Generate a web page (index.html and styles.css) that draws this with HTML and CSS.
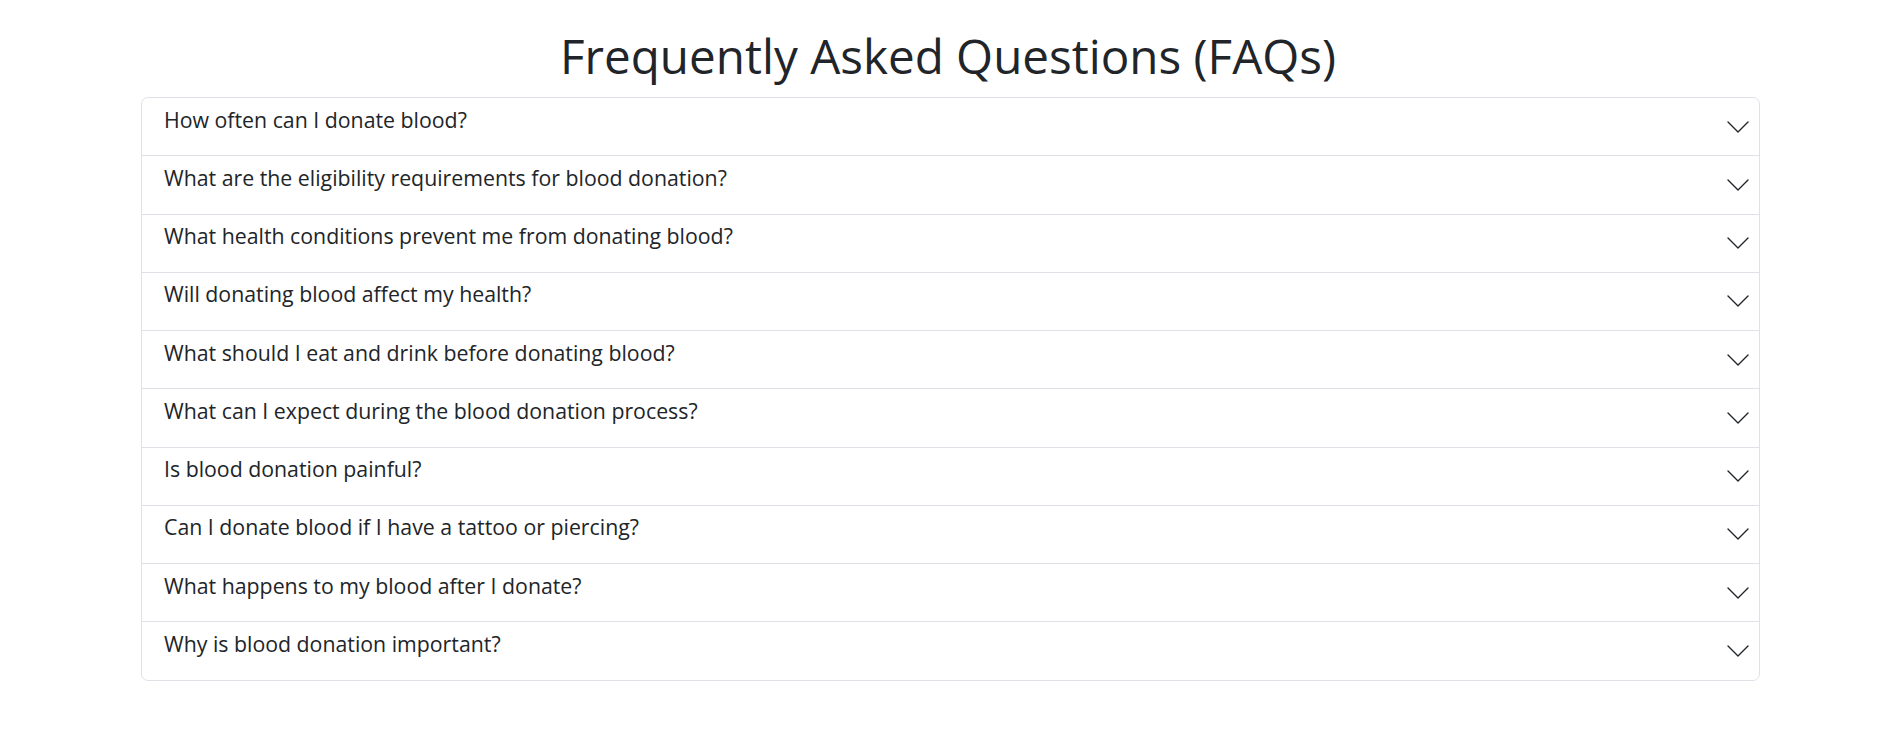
FILE: index.html
```html
<!DOCTYPE html>
<html lang="en">
<head>
<meta charset="utf-8">
<title>FAQs</title>
<link rel="stylesheet" href="styles.css">
</head>
<body>
<main class="page">
  <h1 class="title">Frequently Asked Questions (FAQs)</h1>
  <div class="faq">
    <div class="faq-item"><span class="faq-q">How often can I donate blood?</span><svg class="chev" viewBox="0 0 22 12"><path d="M1 1L11 11L21 1"/></svg></div>
    <div class="faq-item"><span class="faq-q">What are the eligibility requirements for blood donation?</span><svg class="chev" viewBox="0 0 22 12"><path d="M1 1L11 11L21 1"/></svg></div>
    <div class="faq-item"><span class="faq-q">What health conditions prevent me from donating blood?</span><svg class="chev" viewBox="0 0 22 12"><path d="M1 1L11 11L21 1"/></svg></div>
    <div class="faq-item"><span class="faq-q">Will donating blood affect my health?</span><svg class="chev" viewBox="0 0 22 12"><path d="M1 1L11 11L21 1"/></svg></div>
    <div class="faq-item"><span class="faq-q">What should I eat and drink before donating blood?</span><svg class="chev" viewBox="0 0 22 12"><path d="M1 1L11 11L21 1"/></svg></div>
    <div class="faq-item"><span class="faq-q">What can I expect during the blood donation process?</span><svg class="chev" viewBox="0 0 22 12"><path d="M1 1L11 11L21 1"/></svg></div>
    <div class="faq-item"><span class="faq-q">Is blood donation painful?</span><svg class="chev" viewBox="0 0 22 12"><path d="M1 1L11 11L21 1"/></svg></div>
    <div class="faq-item"><span class="faq-q">Can I donate blood if I have a tattoo or piercing?</span><svg class="chev" viewBox="0 0 22 12"><path d="M1 1L11 11L21 1"/></svg></div>
    <div class="faq-item"><span class="faq-q">What happens to my blood after I donate?</span><svg class="chev" viewBox="0 0 22 12"><path d="M1 1L11 11L21 1"/></svg></div>
    <div class="faq-item"><span class="faq-q">Why is blood donation important?</span><svg class="chev" viewBox="0 0 22 12"><path d="M1 1L11 11L21 1"/></svg></div>
  </div>
</main>
</body>
</html>
```
FILE: styles.css
```css
* { box-sizing: border-box; }
html, body { margin: 0; padding: 0; background: #fff; }
body {
  font-family: "Open Sans", "Liberation Sans", sans-serif;
  color: #212529;
}
.page {
  padding-top: 18px;
}
.title {
  margin: 0 0 4px;
  font-size: 47.6px;
  font-weight: 400;
  line-height: 75px;
  text-align: center;
  color: #212529;
}
.faq {
  width: 1619px;
  margin: 0 136px 0 141px;
  border: 1px solid #dee2e6;
  border-radius: 7px;
}
.faq-item {
  display: flex;
  align-items: center;
  justify-content: space-between;
  height: 58.27px;
  padding: 0 10px 0 22px;
  border-top: 1px solid #dee2e6;
}
.faq-item:first-child {
  border-top: none;
  height: 57.27px;
}
.faq-q {
  font-size: 21.3px;
  line-height: 30px;
  padding-bottom: 14px;
}
.chev {
  width: 22px;
  height: 12px;
  fill: none;
  stroke: #212529;
  stroke-width: 1.4;
  stroke-linecap: round;
  stroke-linejoin: round;
}
```
